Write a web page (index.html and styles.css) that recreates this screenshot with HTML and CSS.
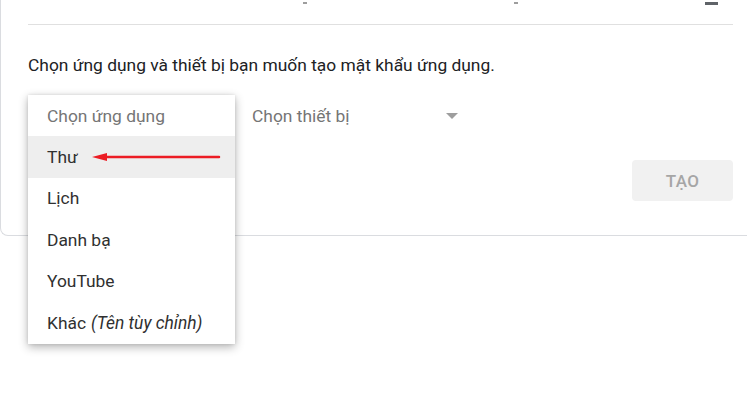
FILE: index.html
```html
<!DOCTYPE html>
<html lang="vi">
<head>
    <meta charset="UTF-8">
    <title>Mật khẩu ứng dụng</title>
    <link rel="stylesheet" href="styles.css">
</head>
<body>

<div class="card">
    <div class="card-top">
        <span class="mark mark-a"></span>
        <span class="mark mark-b"></span>
        <span class="mark mark-c"></span>
    </div>
    <div class="divider"></div>

    <p class="intro">Chọn ứng dụng và thiết bị bạn muốn tạo mật khẩu ứng dụng.</p>

    <div class="selects">
        <div class="select select-app">
            <div class="menu">
                <div class="menu-item placeholder">Chọn ứng dụng</div>
                <div class="menu-item active">
                    Thư
                    <svg class="arrow" width="130" height="10" viewBox="0 0 130 10">
                        <path d="M14 5 H128" stroke="#ec1c24" stroke-width="2.5" stroke-linecap="round"/>
                        <path d="M1 5 L16 1 L16 9 Z" fill="#ec1c24"/>
                    </svg>
                </div>
                <div class="menu-item">Lịch</div>
                <div class="menu-item">Danh bạ</div>
                <div class="menu-item">YouTube</div>
                <div class="menu-item">Khác <em>(Tên tùy chỉnh)</em></div>
            </div>
        </div>
        <div class="select select-device">
            <span>Chọn thiết bị</span>
            <span class="caret"></span>
        </div>
    </div>

    <div class="actions">
        <button class="btn" disabled>TẠO</button>
    </div>
</div>

</body>
</html>
```

FILE: styles.css
```css
body {
    margin: 0;
    background-color: #FFFFFF;
    font-family: Roboto, "Noto Sans", Arial, sans-serif;
    overflow: hidden;
    height: 394px;
}

.card {
    width: 760px;
    box-sizing: border-box;
    padding: 0 27px 34px 27px;
    border-left: 1px solid #dadce0;
    border-bottom: 1px solid #dadce0;
    border-bottom-left-radius: 8px;
}

.card-top {
    height: 24px;
    display: flex;
}

.mark {
    display: block;
    height: 2px;
    margin-top: 2px;
    background-color: #9e9e9e;
}

.mark-a {
    width: 4px;
    margin-left: 275px;
}

.mark-b {
    width: 4px;
    margin-left: 207px;
}

.mark-c {
    width: 13px;
    height: 3px;
    margin-left: 187px;
    background-color: #5f6368;
}

.divider {
    height: 1px;
    background-color: #e0e0e0;
}

.intro {
    margin: 30px 0 0 0;
    font-size: 17.4px;
    line-height: 20px;
    color: #202124;
}

.selects {
    display: flex;
    margin-top: 20px;
    height: 41px;
}

.select {
    position: relative;
    height: 41px;
}

.select-app {
    width: 207px;
}

.select-device {
    margin-left: 17px;
    width: 207px;
    display: flex;
    align-items: center;
    justify-content: space-between;
    font-size: 17.4px;
    color: #757575;
}

.caret {
    width: 0;
    height: 0;
    border-left: 6px solid transparent;
    border-right: 6px solid transparent;
    border-top: 6px solid #9e9e9e;
    margin-right: 1px;
}

.menu {
    position: absolute;
    top: 0;
    left: 0;
    width: 207px;
    background-color: #FFFFFF;
    box-shadow: 0 3px 9px rgba(0, 0, 0, 0.3), 0 0 3px rgba(0, 0, 0, 0.1);
    z-index: 2;
}

.menu-item {
    position: relative;
    height: 41.5px;
    padding-left: 19px;
    display: flex;
    align-items: center;
    font-size: 17.4px;
    color: #303030;
}

.menu-item.placeholder {
    height: 41px;
    color: #757575;
}

.menu-item.active {
    background-color: #eeeeee;
}

.menu-item em {
    margin-left: 5px;
}

.arrow {
    position: absolute;
    left: 63px;
    top: 16px;
}

.actions {
    display: flex;
    justify-content: flex-end;
    margin-top: 24px;
}

.btn {
    width: 101px;
    height: 41px;
    border: none;
    border-radius: 4px;
    background-color: #f1f1f1;
    color: #a6a6a6;
    font-family: Roboto, Arial, sans-serif;
    font-size: 17px;
    font-weight: 500;
    letter-spacing: 0.3px;
}
```
